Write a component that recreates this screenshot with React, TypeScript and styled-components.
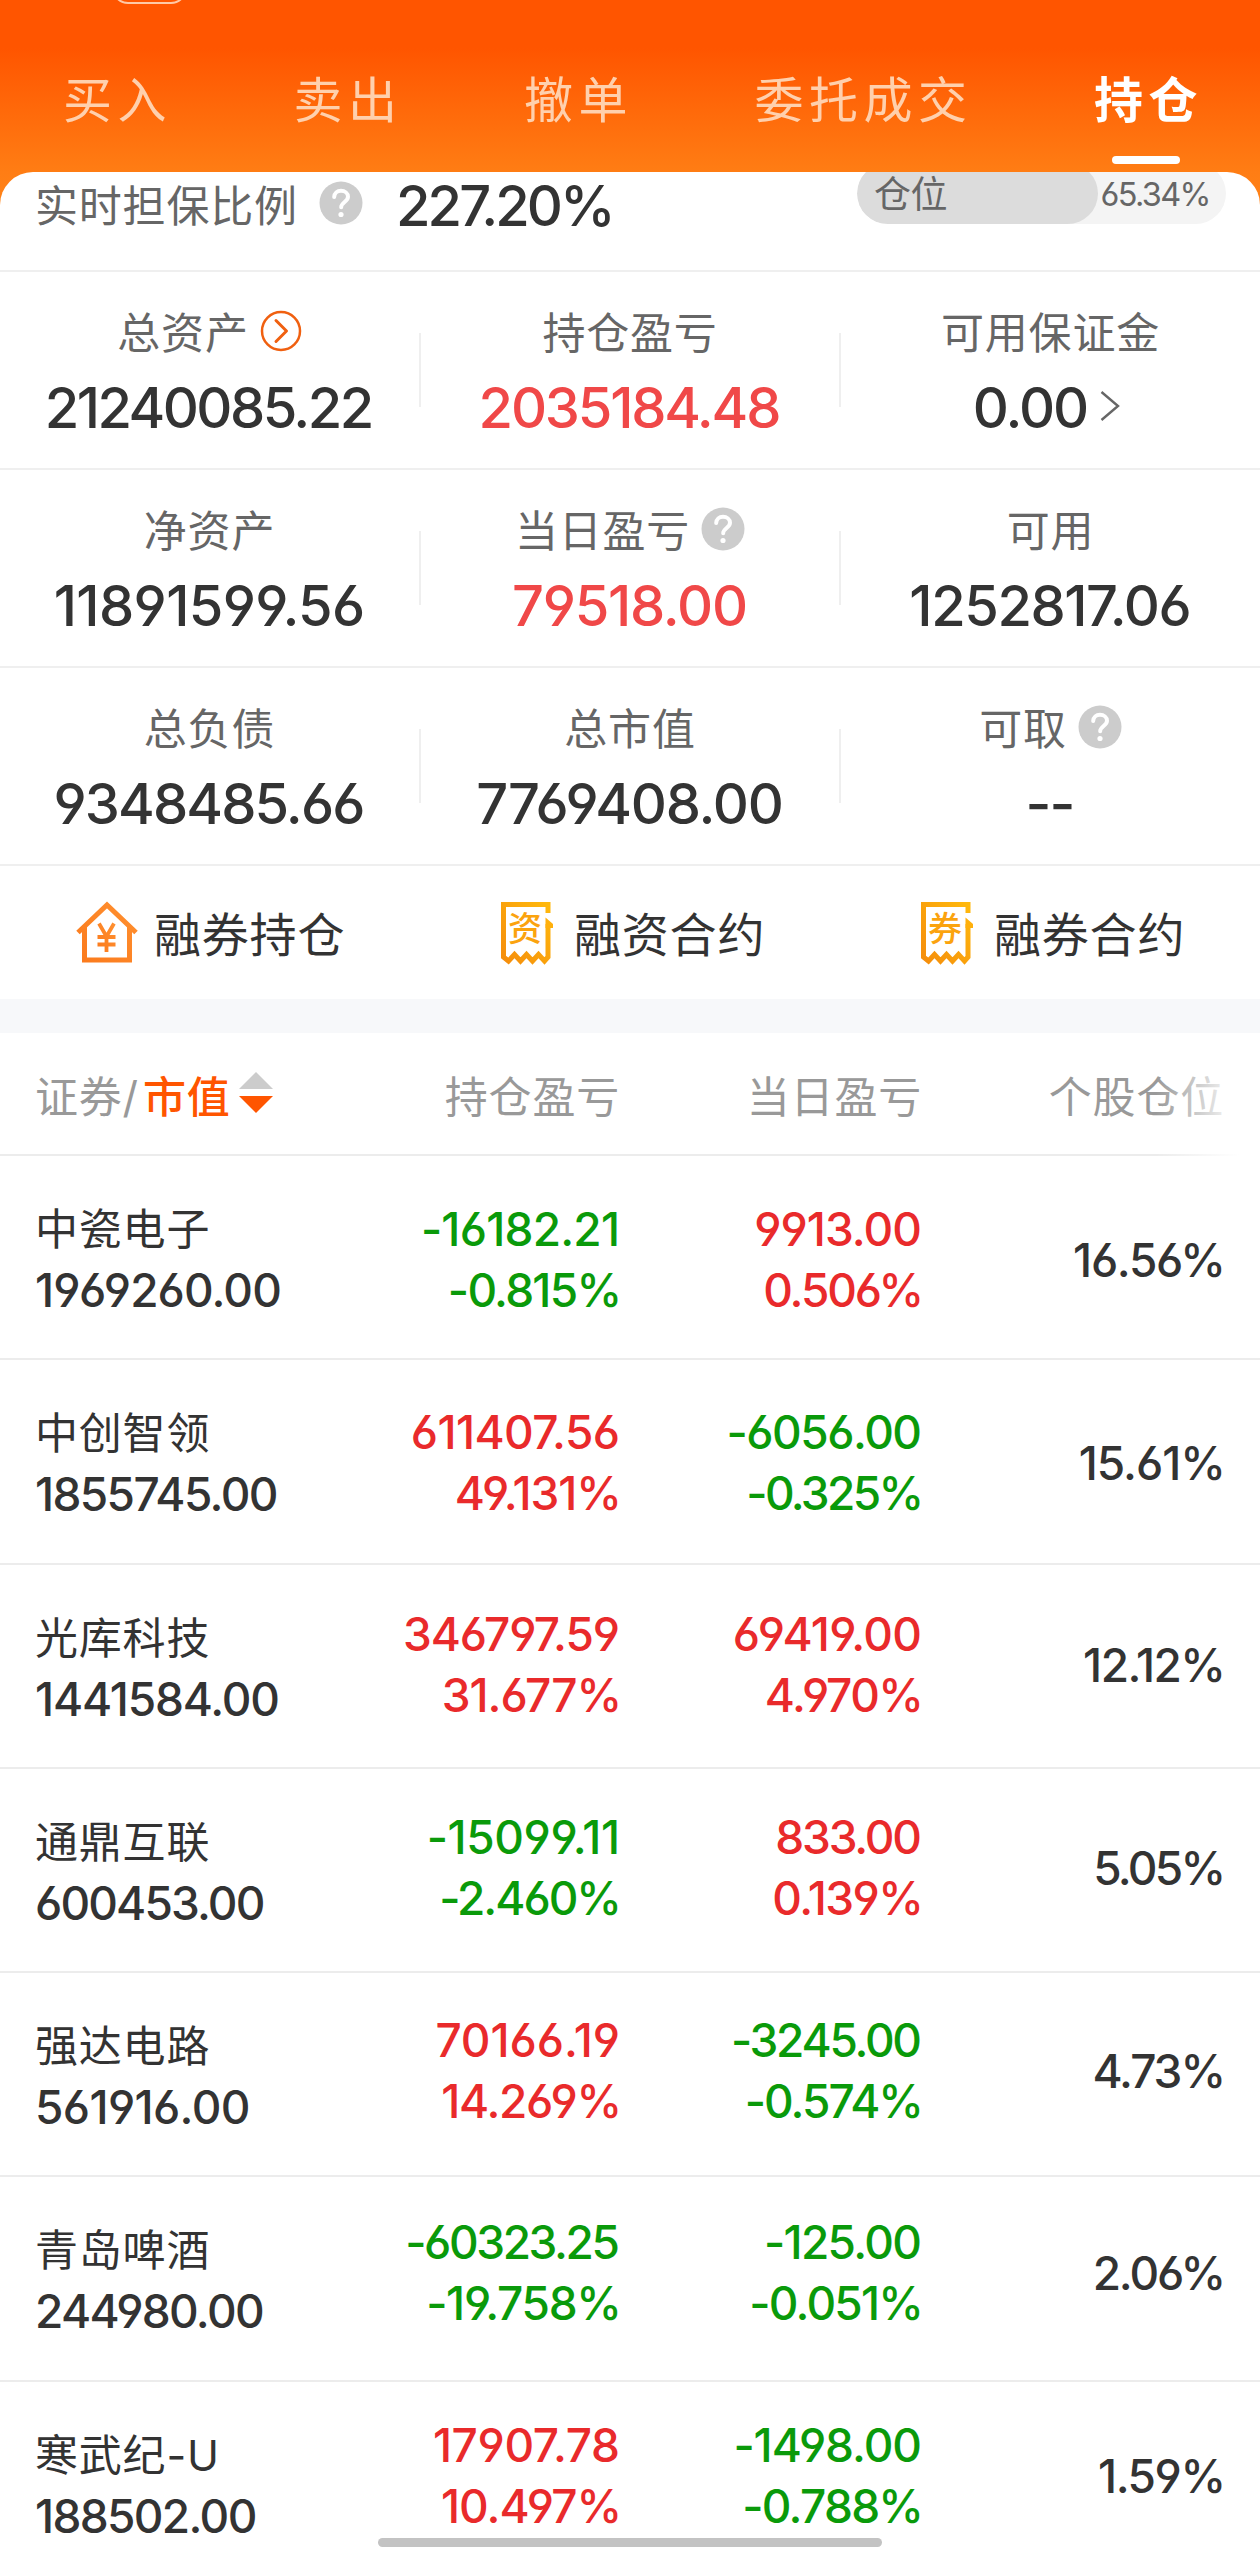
import React from "react";
import styled, { createGlobalStyle, css } from "styled-components";

const GlobalStyle = createGlobalStyle`
  * { box-sizing: border-box; }
  body {
    margin: 0;
    background: #fff;
    color: #333;
    font-family: Inter, "Noto Sans CJK SC", sans-serif;
  }
`;

const numeric = css`
  font-feature-settings: "cv03", "cv04", "calt" 0;
  font-weight: 500;
  white-space: nowrap;
`;

const Screen = styled.div`
  position: relative;
  display: flex;
  flex-direction: column;
  width: 1260px;
  height: 2551px;
  overflow: hidden;
  background: #fff;
`;

const Header = styled.header`
  position: relative;
  flex: none;
  height: 210px;
  background: linear-gradient(#ff5500 0, #ff5500 48px, #ff7d14 172px, #ff8418 210px);
`;

const TopPill = styled.div`
  position: absolute;
  left: 112px;
  top: -30px;
  width: 75px;
  height: 34px;
  border: 2px solid #ffc9a6;
  border-radius: 16px;
`;

const Tabs = styled.nav`
  display: flex;
  gap: 121.5px;
  padding: 64px 0 0 63px;
`;

const Tab = styled.div<{ $active?: boolean }>`
  position: relative;
  height: 100px;
  line-height: 73px;
  font-size: 49px;
  letter-spacing: 5.5px;
  white-space: nowrap;
  color: ${(p) => (p.$active ? "#fff" : "#ffd0ad")};
  font-weight: ${(p) => (p.$active ? 700 : 400)};
  &::after {
    content: "";
    display: ${(p) => (p.$active ? "block" : "none")};
    position: absolute;
    left: 18px;
    bottom: 0;
    width: 68px;
    height: 8px;
    border-radius: 4px;
    background: #fff;
  }
`;

const Panel = styled.main`
  position: relative;
  display: flex;
  flex-direction: column;
  flex: 1;
  margin-top: -38px;
  border-radius: 33px 33px 0 0;
  background: #fff;
  overflow: hidden;
`;

const RatioRow = styled.section`
  display: flex;
  align-items: flex-start;
  flex: none;
  height: 100px;
  padding: 0 34px 0 35px;
  border-bottom: 2px solid #efefef;
`;

const Label = styled.div`
  display: flex;
  align-items: center;
  height: 60px;
  font-size: 43px;
  letter-spacing: 0.8px;
  color: #666;
  white-space: nowrap;
`;

const RatioLabel = styled(Label)`
  gap: 21px;
  margin-top: 1px;
  width: 361px;
  svg { margin-top: -1px; }
`;

const Figure = styled.div<{ $tone?: string }>`
  ${numeric}
  display: flex;
  align-items: center;
  height: 60px;
  font-size: 56px;
  color: ${(p) => p.$tone ?? "#333"};
`;

const RatioValue = styled(Figure)`
  margin-top: 4px;
`;

const PositionBar = styled.div`
  display: flex;
  align-items: center;
  justify-content: space-between;
  width: 369px;
  height: 61px;
  margin: -9px 0 0 auto;
  padding-right: 16px;
  border-radius: 31px;
  background: #f4f4f4;
  overflow: hidden;
`;

const PositionFill = styled.div`
  flex: none;
  width: 241px;
  height: 61px;
  padding-left: 17px;
  border-radius: 31px;
  background: #dcdcdc;
  line-height: 64px;
  font-size: 37px;
  letter-spacing: -0.5px;
  color: #666;
`;

const PositionValue = styled.div`
  ${numeric}
  margin-top: 2px;
  font-size: 32.5px;
  font-weight: 400;
  color: #666;
`;

const StatRow = styled.section`
  display: grid;
  grid-template-columns: 421px 420px 419px;
  flex: none;
  height: 198px;
  border-bottom: 2px solid #efefef;
  align-items: center;
`;

const Stat = styled.div`
  display: flex;
  flex-direction: column;
  align-items: center;
  justify-content: center;
  height: 74px;
  gap: 18px;
  border-right: 2px solid #efefef;
  &:last-child { border-right: 0; }
`;

const StatLabel = styled(Label)`
  gap: 11px;
  margin-top: -2px;
  svg { position: relative; top: 1px; }
`;

const StatFigure = styled(Figure)`
  gap: 15px;
`;

const LinkFigure = styled(StatFigure)`
  gap: 11px;
  margin-right: 8px;
  svg { position: relative; top: -2px; }
`;

const Actions = styled.section`
  display: grid;
  grid-template-columns: repeat(3, 1fr);
  flex: none;
  height: 133px;
`;

const Action = styled.div`
  display: flex;
  align-items: center;
  gap: 14px;
  padding-left: 74px;
  font-size: 47px;
  letter-spacing: 0.8px;
  white-space: nowrap;
`;

const ActionText = styled.span`
  margin-top: -3px;
`;

const Band = styled.div`
  flex: none;
  height: 34px;
  background: #f7f8fa;
`;

const columns = css`
  display: grid;
  grid-template-columns: 353px 267px 302px 302px;
`;

const TableHead = styled.div`
  position: relative;
  ${columns}
  align-items: center;
  flex: none;
  height: 123px;
  border-bottom: 2px solid #ececec;
  font-size: 43px;
  letter-spacing: 0.8px;
  color: #999;
  &::after {
    content: "";
    position: absolute;
    right: 0;
    top: 0;
    bottom: -2px;
    width: 104px;
    background: linear-gradient(90deg, rgba(255, 255, 255, 0), #fff 80%);
  }
`;

const HeadCell = styled.div`
  text-align: right;
  white-space: nowrap;
`;

const SortCell = styled.div`
  display: flex;
  align-items: center;
  padding-left: 35px;
  white-space: nowrap;
  b { margin-left: 4px; font-weight: 500; color: #ff5500; }
  svg { margin-left: 8px; margin-top: -1px; }
`;

const Row = styled.div`
  ${columns}
  flex: none;
  height: 204.3px;
  border-bottom: 2px solid #ececec;
`;

const Security = styled.div`
  padding: 43px 0 0 35px;
  line-height: 61px;
  white-space: nowrap;
`;

const SecurityName = styled.div`
  font-size: 43px;
  letter-spacing: 0.8px;
`;

const Amount = styled.div`
  ${numeric}
  height: 61px;
  line-height: 61px;
  font-size: 46px;
`;

const Pair = styled.div<{ $tone: string; $shift: number }>`
  padding-top: 43px;
  margin-top: ${(p) => -p.$shift}px;
  text-align: right;
  color: ${(p) => p.$tone};
`;

const Share = styled.div<{ $shift: number }>`
  padding-top: 74px;
  margin-top: ${(p) => -p.$shift}px;
  text-align: right;
`;

const HomeBar = styled.div`
  position: absolute;
  left: 378px;
  bottom: 4px;
  width: 504px;
  height: 9px;
  border-radius: 5px;
  background: #c3c3c3;
`;

const GLYPH_TRIM: Record<string, number> = {
  "1": 0.07, "7": 0.04, "6": 0.03, "9": 0.035,
  "2": -0.035, "3": -0.035, "5": -0.035, "%": -0.05,
};

/* Tracking is spread evenly over the figure so its overall width stays balanced. */
const Digits = ({ children }: { children: string }) => {
  const trim = [...children].reduce((sum, ch) => sum + (GLYPH_TRIM[ch] ?? 0), 0);
  const tracking = -0.036 + trim / children.length;
  const overhang = children.endsWith("%") ? 0.045 : 0;
  return (
    <span style={{ letterSpacing: `${tracking.toFixed(4)}em`, marginRight: `${(-tracking - overhang).toFixed(4)}em` }}>
      {children}
    </span>
  );
};

const Help = () => (
  <svg width="44" height="44" viewBox="0 0 44 44" fill="none">
    <circle cx="22" cy="22" r="21.5" fill="#ccc" />
    <path d="M15.200 16c.2-4 3-6.200 6.800-6.200s7 2.400 7 6c0 5-6.800 5.400-6.800 10.500" stroke="#fff" strokeWidth="4" strokeLinecap="round" />
    <circle cx="22" cy="33.500" r="2.600" fill="#fff" />
  </svg>
);

const CircleArrow = () => (
  <svg width="42" height="42" viewBox="0 0 42 42" fill="none" stroke="#f06010" strokeWidth="2.500">
    <circle cx="21" cy="21" r="19" />
    <path d="M16 10.500 26.500 21 16 31.500" strokeWidth="3" strokeLinecap="round" strokeLinejoin="round" />
  </svg>
);

const Chevron = () => (
  <svg width="20" height="32" viewBox="0 0 20 32" fill="none" stroke="#666" strokeWidth="2.400">
    <path d="M1.500 2 18 16 1.500 30" />
  </svg>
);

const House = () => (
  <svg width="66" height="66" viewBox="0 0 66 66" fill="none">
    <defs>
      <linearGradient id="house" x1="0" y1="1" x2="1" y2="0">
        <stop offset="0" stopColor="#fb7a1c" />
        <stop offset="1" stopColor="#ff9030" />
      </linearGradient>
    </defs>
    <g stroke="url(#house)">
      <path d="M4 32.500 33 5l29 27.500M10.500 27v33h45V27" strokeWidth="5" />
      <path d="m25 23.500 7.500 13 7.500-13M23.500 37h18M23.500 44.500h18M32.500 36v16" strokeWidth="3.800" />
    </g>
  </svg>
);

const GlyphText = styled.text`
  font-family: "Noto Sans CJK SC", sans-serif;
  font-size: 34px;
  letter-spacing: 0;
  font-weight: 500;
`;

const Receipt = ({ glyph }: { glyph: string }) => (
  <svg width="66" height="66" viewBox="0 0 66 66" fill="none">
    <defs>
      <linearGradient id="receipt" x1="0" y1="1" x2="1" y2="0">
        <stop offset="0" stopColor="#f58e0c" />
        <stop offset="1" stopColor="#ffb80c" />
      </linearGradient>
    </defs>
    <path
      d="M54 13V4.500H9.500V57l5 4 6-6.500 6 6.500 6-6.500 6 6.500 6-6.500 6 6.500 3.500-4V24"
      stroke="url(#receipt)"
      strokeWidth="5"
    />
    <path d="M51.500 17.500V28h7.500v-4z" fill="#ffb00c" />
    <GlyphText x="31" y="41" textAnchor="middle" fill="#fba30e">{glyph}</GlyphText>
  </svg>
);

const SortIcon = () => (
  <svg width="34" height="42" viewBox="0 0 34 42">
    <path d="M17 0 34 17H0z" fill="#ccc" />
    <path d="M0 24h34L17 41z" fill="#ff5500" />
  </svg>
);

const RED = "#e92a2b";
const GREEN = "#0a9a0a";
const SUMMARY_RED = "#f04848";

type StatItem = { label: string; value: string; tone?: string; icon?: React.ReactNode; link?: boolean };

const stats: StatItem[][] = [
  [
    { label: "总资产", value: "21240085.22", icon: <CircleArrow /> },
    { label: "持仓盈亏", value: "2035184.48", tone: SUMMARY_RED },
    { label: "可用保证金", value: "0.00", link: true },
  ],
  [
    { label: "净资产", value: "11891599.56" },
    { label: "当日盈亏", value: "79518.00", tone: SUMMARY_RED, icon: <Help /> },
    { label: "可用", value: "1252817.06" },
  ],
  [
    { label: "总负债", value: "9348485.66" },
    { label: "总市值", value: "7769408.00" },
    { label: "可取", value: "--", icon: <Help /> },
  ],
];

const holdings = [
  ["中瓷电子", "1969260.00", "-16182.21", "-0.815%", "9913.00", "0.506%", "16.56%"],
  ["中创智领", "1855745.00", "611407.56", "49.131%", "-6056.00", "-0.325%", "15.61%"],
  ["光库科技", "1441584.00", "346797.59", "31.677%", "69419.00", "4.970%", "12.12%"],
  ["通鼎互联", "600453.00", "-15099.11", "-2.460%", "833.00", "0.139%", "5.05%"],
  ["强达电路", "561916.00", "70166.19", "14.269%", "-3245.00", "-0.574%", "4.73%"],
  ["青岛啤酒", "244980.00", "-60323.25", "-19.758%", "-125.00", "-0.051%", "2.06%"],
  ["寒武纪-U", "188502.00", "17907.78", "10.497%", "-1498.00", "-0.788%", "1.59%"],
];

const toneOf = (value: string) => (value.startsWith("-") ? GREEN : RED);

export default function App() {
  return (
    <Screen>
      <GlobalStyle />
      <Header>
        <TopPill />
        <Tabs>
          <Tab>买入</Tab>
          <Tab>卖出</Tab>
          <Tab>撤单</Tab>
          <Tab>委托成交</Tab>
          <Tab $active>持仓</Tab>
        </Tabs>
      </Header>
      <Panel>
        <RatioRow>
          <RatioLabel>实时担保比例<Help /></RatioLabel>
          <RatioValue><Digits>227.20%</Digits></RatioValue>
          <PositionBar>
            <PositionFill>仓位</PositionFill>
            <PositionValue><Digits>65.34%</Digits></PositionValue>
          </PositionBar>
        </RatioRow>
        {stats.map((row, i) => (
          <StatRow key={i}>
            {row.map((s) => (
              <Stat key={s.label}>
                <StatLabel>{s.label}{s.icon}</StatLabel>
                {s.link ? (
                  <LinkFigure><Digits>{s.value}</Digits><Chevron /></LinkFigure>
                ) : (
                  <StatFigure $tone={s.tone}><Digits>{s.value}</Digits></StatFigure>
                )}
              </Stat>
            ))}
          </StatRow>
        ))}
        <Actions>
          <Action><House /><ActionText>融券持仓</ActionText></Action>
          <Action><Receipt glyph="资" /><ActionText>融资合约</ActionText></Action>
          <Action><Receipt glyph="券" /><ActionText>融券合约</ActionText></Action>
        </Actions>
        <Band />
        <TableHead>
          <SortCell>证券/<b>市值</b><SortIcon /></SortCell>
          <HeadCell>持仓盈亏</HeadCell>
          <HeadCell>当日盈亏</HeadCell>
          <HeadCell>个股仓位</HeadCell>
        </TableHead>
        {holdings.map(([name, value, pnl, pnlRate, day, dayRate, share], i) => (
          <Row key={name}>
            <Security>
              <SecurityName>{name}</SecurityName>
              <Amount><Digits>{value}</Digits></Amount>
            </Security>
            <Pair $tone={toneOf(pnl)} $shift={i * 1.6}>
              <Amount><Digits>{pnl}</Digits></Amount>
              <Amount><Digits>{pnlRate}</Digits></Amount>
            </Pair>
            <Pair $tone={toneOf(day)} $shift={i * 1.6}>
              <Amount><Digits>{day}</Digits></Amount>
              <Amount><Digits>{dayRate}</Digits></Amount>
            </Pair>
            <Share $shift={i * 1.6}>
              <Amount><Digits>{share}</Digits></Amount>
            </Share>
          </Row>
        ))}
      </Panel>
      <HomeBar />
    </Screen>
  );
}
